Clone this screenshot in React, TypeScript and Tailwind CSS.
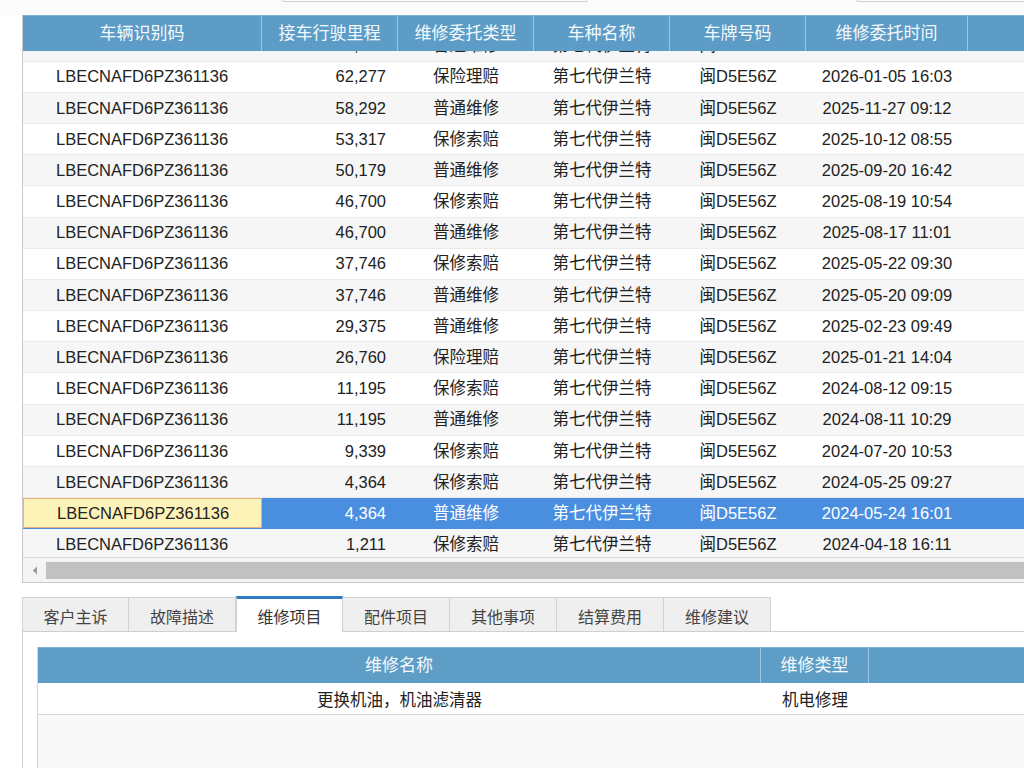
import React from "react";

type Row = {
  vin: string;
  mileage: string;
  type: string;
  model: string;
  plate: string;
  time: string;
};

const VIN = "LBECNAFD6PZ361136";

const rows: Row[] = [
  { vin: VIN, mileage: "65,010", type: "普通维修", model: "第七代伊兰特", plate: "闽D5E56Z", time: "2026-02-11 10:21" },
  { vin: VIN, mileage: "62,277", type: "保险理赔", model: "第七代伊兰特", plate: "闽D5E56Z", time: "2026-01-05 16:03" },
  { vin: VIN, mileage: "58,292", type: "普通维修", model: "第七代伊兰特", plate: "闽D5E56Z", time: "2025-11-27 09:12" },
  { vin: VIN, mileage: "53,317", type: "保修索赔", model: "第七代伊兰特", plate: "闽D5E56Z", time: "2025-10-12 08:55" },
  { vin: VIN, mileage: "50,179", type: "普通维修", model: "第七代伊兰特", plate: "闽D5E56Z", time: "2025-09-20 16:42" },
  { vin: VIN, mileage: "46,700", type: "保修索赔", model: "第七代伊兰特", plate: "闽D5E56Z", time: "2025-08-19 10:54" },
  { vin: VIN, mileage: "46,700", type: "普通维修", model: "第七代伊兰特", plate: "闽D5E56Z", time: "2025-08-17 11:01" },
  { vin: VIN, mileage: "37,746", type: "保修索赔", model: "第七代伊兰特", plate: "闽D5E56Z", time: "2025-05-22 09:30" },
  { vin: VIN, mileage: "37,746", type: "普通维修", model: "第七代伊兰特", plate: "闽D5E56Z", time: "2025-05-20 09:09" },
  { vin: VIN, mileage: "29,375", type: "普通维修", model: "第七代伊兰特", plate: "闽D5E56Z", time: "2025-02-23 09:49" },
  { vin: VIN, mileage: "26,760", type: "保险理赔", model: "第七代伊兰特", plate: "闽D5E56Z", time: "2025-01-21 14:04" },
  { vin: VIN, mileage: "11,195", type: "保修索赔", model: "第七代伊兰特", plate: "闽D5E56Z", time: "2024-08-12 09:15" },
  { vin: VIN, mileage: "11,195", type: "普通维修", model: "第七代伊兰特", plate: "闽D5E56Z", time: "2024-08-11 10:29" },
  { vin: VIN, mileage: "9,339", type: "保修索赔", model: "第七代伊兰特", plate: "闽D5E56Z", time: "2024-07-20 10:53" },
  { vin: VIN, mileage: "4,364", type: "保修索赔", model: "第七代伊兰特", plate: "闽D5E56Z", time: "2024-05-25 09:27" },
  { vin: VIN, mileage: "4,364", type: "普通维修", model: "第七代伊兰特", plate: "闽D5E56Z", time: "2024-05-24 16:01" },
  { vin: VIN, mileage: "1,211", type: "保修索赔", model: "第七代伊兰特", plate: "闽D5E56Z", time: "2024-04-18 16:11" },
];

const SELECTED = 15;

const tabs = ["客户主诉", "故障描述", "维修项目", "配件项目", "其他事项", "结算费用", "维修建议"];

export default function App() {
  return (
    <div className="w-[1024px] h-[768px] overflow-hidden bg-white text-[#222] font-['Liberation_Sans','Noto_Sans_CJK_SC',sans-serif]">
      {/* top search strip edge */}
      <div className="h-[15px] flex bg-[#fbfbfb]">
        <div className="w-[282px]" />
        <div className="w-[306px] h-[2px] border-b border-x border-[#cfcfcf] rounded-b-[2px]" />
        <div className="w-[268px]" />
        <div className="flex-1 h-[2px] border-b border-l border-[#cfcfcf] rounded-bl-[2px]" />
      </div>

      {/* main grid */}
      <div className="pl-[22px]">
        <div className="border-l border-b border-[#c8c8c8]">
          <div className="h-[36px] flex bg-[#5c9cc6] text-[#f4f9fd] text-[17px] border-t border-[#7fb3d6]">
            <div className="w-[239px] flex items-center justify-center border-r border-[#9cc8e4]">车辆识别码</div>
            <div className="w-[136px] flex items-center justify-center border-r border-[#9cc8e4]">接车行驶里程</div>
            <div className="w-[136px] flex items-center justify-center border-r border-[#9cc8e4]">维修委托类型</div>
            <div className="w-[136px] flex items-center justify-center border-r border-[#9cc8e4]">车种名称</div>
            <div className="w-[136px] flex items-center justify-center border-r border-[#9cc8e4]">车牌号码</div>
            <div className="w-[162px] flex items-center justify-center border-r border-[#9cc8e4]">维修委托时间</div>
            <div className="flex-1" />
          </div>

          <div className="h-[506px] overflow-hidden">
            <div className="mt-[-20.6px]">
              {rows.map((r, i) => {
                const sel = i === SELECTED;
                return (
                  <div
                    key={i}
                    className={
                      "h-[31.2px] flex text-[16.5px] border-b " +
                      (sel
                        ? "bg-[#4a8fdf] text-white border-[#4a8fdf]"
                        : i % 2 === 0
                        ? "bg-[#f6f6f6] border-[#ebebeb]"
                        : "bg-white border-[#ebebeb]")
                    }
                  >
                    <div
                      className={
                        "w-[239px] flex items-center pl-[33px] " +
                        (sel ? "bg-[#fdf3b8] text-[#222] border border-[#e9b27c]" : "")
                      }
                    >
                      {r.vin}
                    </div>
                    <div className="w-[136px] flex items-center justify-end pr-[12px]">{r.mileage}</div>
                    <div className="w-[136px] flex items-center justify-center">{r.type}</div>
                    <div className="w-[136px] flex items-center justify-center">{r.model}</div>
                    <div className="w-[136px] flex items-center justify-center">{r.plate}</div>
                    <div className="w-[162px] flex items-center justify-center">{r.time}</div>
                    <div className="flex-1" />
                  </div>
                );
              })}
            </div>
          </div>

          {/* horizontal scrollbar */}
          <div className="h-[25px] border-t border-[#d8d8d8] bg-[#f4f4f4] flex items-center">
            <div className="w-[23px] flex items-center justify-center">
              <svg width="6" height="9" viewBox="0 0 6 9">
                <path d="M5 0.5 L0.8 4.5 L5 8.5 Z" fill="#9a9a9a" />
              </svg>
            </div>
            <div className="flex-1 h-[17px] bg-[#c1c1c1]" />
          </div>
        </div>
      </div>

      {/* tabs */}
      <div className="mt-[14px] pl-[22px]">
        <div className="h-[35px] flex items-end border-b border-[#cfcfcf]">
          {tabs.map((t, i) =>
            i === 2 ? (
              <div
                key={t}
                className="w-[107px] h-[36px] -mb-px pt-[5px] bg-white border-t-[3px] border-t-[#2f7cbf] border-x border-x-[#d0d0d0] flex items-center justify-center text-[16px] text-[#333]"
              >
                {t}
              </div>
            ) : (
              <div
                key={t}
                className="w-[107px] h-[34px] pt-[6px] bg-[#efefef] border-t border-r border-[#d3d3d3] first:border-l flex items-center justify-center text-[16px] text-[#444]"
              >
                {t}
              </div>
            )
          )}
        </div>
      </div>

      {/* tab content */}
      <div className="pl-[22px]">
        <div className="border-l border-[#cfcfcf] h-[140px] pl-[14px] pt-[15px]">
          <div className="border-l border-[#d4d4d4] h-full flex flex-col bg-[#f8f8f8]">
            <div className="h-[36px] flex bg-[#5e9dc6] text-[#f4f9fd] text-[17px] border-t border-[#7fb3d6]">
              <div className="w-[723px] flex items-center justify-center border-r border-[#9cc8e4]">维修名称</div>
              <div className="w-[108px] flex items-center justify-center border-r border-[#9cc8e4]">维修类型</div>
              <div className="flex-1" />
            </div>
            <div className="h-[32px] pt-[3px] flex bg-white border-b border-[#d6d6d6] text-[16.5px]">
              <div className="w-[723px] flex items-center justify-center">更换机油，机油滤清器</div>
              <div className="w-[108px] flex items-center justify-center">机电修理</div>
              <div className="flex-1" />
            </div>
            <div className="flex-1" />
          </div>
        </div>
      </div>
    </div>
  );
}
